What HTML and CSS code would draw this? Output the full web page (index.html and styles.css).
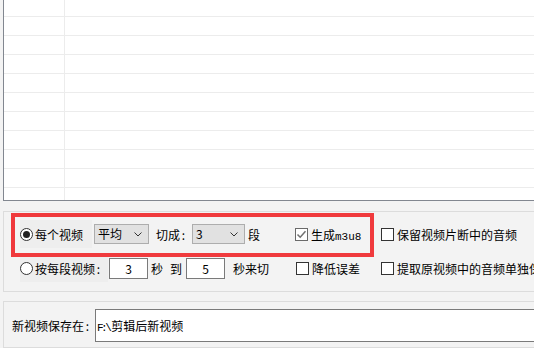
FILE: index.html
```html
<!DOCTYPE html>
<html lang="zh-CN">
<head>
  <meta charset="UTF-8" />
  <title>视频分割</title>
  <link rel="stylesheet" href="styles.css">
</head>
<body>
  <div class="app">

    <div class="grade">
      <div class="linhas">
        <div class="linha"><span class="cel"></span></div>
        <div class="linha"><span class="cel"></span></div>
        <div class="linha"><span class="cel"></span></div>
        <div class="linha"><span class="cel"></span></div>
        <div class="linha"><span class="cel"></span></div>
        <div class="linha"><span class="cel"></span></div>
        <div class="linha"><span class="cel"></span></div>
        <div class="linha"><span class="cel"></span></div>
        <div class="linha"><span class="cel"></span></div>
        <div class="linha"><span class="cel"></span></div>
        <div class="linha"><span class="cel"></span></div>
      </div>
    </div>

    <div class="grupo grupo-opcoes">
      <div class="destaque"></div>

      <div class="fila">
        <div class="esq">
          <label class="radio-box largo1"><span class="radio on"></span><span>每个视频</span></label>
          <div class="combo c1"><span>平均</span><svg class="seta" width="8" height="5" viewBox="0 0 8 5"><path d="M0.5 0.5 L4 4 L7.5 0.5" fill="none" stroke="#333" stroke-width="1"/></svg></div>
          <span class="txt corte">切成<span class="dois">:</span></span>
          <div class="combo c2"><span>3</span><svg class="seta" width="8" height="5" viewBox="0 0 8 5"><path d="M0.5 0.5 L4 4 L7.5 0.5" fill="none" stroke="#333" stroke-width="1"/></svg></div>
          <span class="txt seg">段</span>
        </div>
        <label class="chk col1"><span class="caixa gris"><svg width="11" height="11" viewBox="0 0 11 11"><path d="M1.5 5.5 L4.2 8.2 L9.5 2.2" fill="none" stroke="#707070" stroke-width="1.5"/></svg></span><span>生成<span class="mono">m3u8</span></span></label>
        <label class="chk"><span class="caixa"></span><span>保留视频片断中的音频</span></label>
      </div>

      <div class="fila fila2">
        <div class="esq">
          <label class="radio-box largo2"><span class="radio"></span><span>按每段视频<span class="dois">:</span></span></label>
          <div class="campo n1">3</div>
          <span class="txt s1">秒</span>
          <span class="txt s2">到</span>
          <div class="campo n2">5</div>
          <span class="txt s3">秒来切</span>
        </div>
        <label class="chk col1 b1"><span class="caixa"></span><span>降低误差</span></label>
        <label class="chk"><span class="caixa"></span><span>提取原视频中的音频单独保存</span></label>
      </div>
    </div>

    <div class="grupo grupo-saida">
      <span class="txt rotulo">新视频保存在<span class="dois">:</span></span>
      <div class="caminho"><span class="mono2">F:\</span>剪辑后新视频</div>
    </div>

  </div>
</body>
</html>
```

FILE: styles.css
```css
html, body {
  margin: 0;
  padding: 0;
}
body {
  width: 534px;
  height: 348px;
  overflow: hidden;
  background-color: #f3f3f3;
  font-family: "Noto Sans CJK SC", "Noto Sans", sans-serif;
  font-size: 12px;
  color: #000;
}
.app {
  width: 620px;
  padding-left: 3px;
}

/* lista de cima */
.grade {
  height: 200px;
  background-color: #fff;
  border-left: 1px solid #828790;
  border-bottom: 1px solid #828790;
  overflow: hidden;
}
.linhas {
  margin-top: -2px;
}
.linha {
  height: 18px;
  border-bottom: 1px solid #ececec;
  display: flex;
}
.cel {
  width: 60px;
  border-right: 1px solid #ececec;
}

/* caixas de grupo */
.grupo {
  border: 1px solid #dcdcdc;
  box-sizing: border-box;
}
.grupo-opcoes {
  position: relative;
  margin-top: 10px;
  height: 81px;
  padding: 8px 0 0 16px;
}
.destaque {
  position: absolute;
  left: 7px;
  top: 1px;
  width: 363px;
  height: 44px;
  box-sizing: border-box;
  border: 4px solid #f03a3d;
}
.fila {
  display: flex;
  align-items: center;
  height: 28px;
}
.fila2 {
  margin-top: 7px;
  height: 27px;
}
.esq {
  width: 275px;
  display: flex;
  align-items: center;
  height: 100%;
}
.radio-box {
  display: flex;
  align-items: center;
  height: 100%;
  background-color: #eeeeee;
  box-sizing: border-box;
}
.largo1 { width: 72px; }
.largo2 { width: 88px; }
.radio {
  width: 11px;
  height: 11px;
  border: 1px solid #333;
  border-radius: 50%;
  background-color: #fff;
  margin-right: 2px;
  position: relative;
  flex: none;
}
.radio.on::after {
  content: "";
  position: absolute;
  left: 2px;
  top: 2px;
  width: 7px;
  height: 7px;
  border-radius: 50%;
  background-color: #222;
}
.dois {
  display: inline-block;
  width: 7px;
  text-align: center;
}
.combo {
  height: 20px;
  box-sizing: border-box;
  border: 1px solid #adadad;
  background-color: #e1e1e1;
  padding-left: 3px;
  display: flex;
  align-items: center;
  justify-content: space-between;
  padding-right: 6px;
  line-height: 18px;
}
.c1 { width: 55px; margin-left: 2px; }
.c2 { width: 53px; margin-left: 0; }
.seta { flex: none; }
.corte {
  margin-left: 7px;
  width: 36px;
}
.seg { margin-left: 3px; }

.campo {
  height: 21px;
  box-sizing: border-box;
  border: 1px solid #7a7a7a;
  background-color: #fff;
  width: 39px;
  text-align: center;
  line-height: 19px;
}
.n1 { margin-left: 1px; }
.s1 { margin-left: 3px; }
.s2 { margin-left: 7px; }
.n2 { margin-left: 4px; }
.s3 { margin-left: 8px; }

.chk {
  display: flex;
  align-items: center;
  white-space: nowrap;
}
.col1 { width: 86px; }
.b1 { margin-left: 1px; width: 85px; }
.caixa {
  width: 11px;
  height: 11px;
  border: 1px solid #333;
  background-color: #fff;
  margin-right: 3px;
  flex: none;
  display: flex;
  align-items: center;
  justify-content: center;
}
.caixa.gris {
  border-color: #6a6a6a;
}
.mono {
  font-family: "Liberation Mono", monospace;
  font-size: 11px;
  vertical-align: baseline;
}

.grupo-saida {
  margin-top: 9px;
  height: 47px;
  padding: 7px 0 0 8px;
  display: flex;
  align-items: flex-start;
}
.rotulo {
  width: 83px;
  line-height: 33px;
}
.caminho {
  flex: 1;
  height: 33px;
  box-sizing: border-box;
  border: 1px solid #7a7a7a;
  background-color: #fff;
  line-height: 31px;
  padding-left: 1px;
}
.mono2 {
  font-family: "Liberation Mono", monospace;
  font-size: 11px;
  letter-spacing: -2.5px;
  margin-right: 2px;
}
```
